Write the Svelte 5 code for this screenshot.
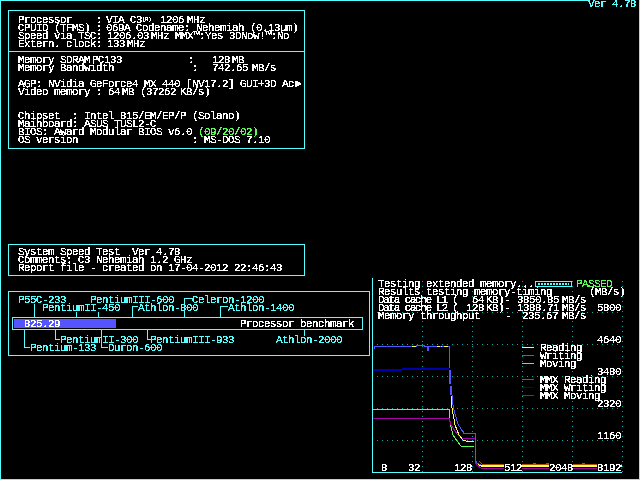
<script>
  const top1 = [
    [['Processor    :'], [' VIA C3', 'n2'], ['(R)', 'sup'], [' 1206', 'p3'], [' MHz', 'n3']],
    [['CPUID (TFMS) :'], [' 069A Codename: Nehemiah (0.13µm)', 'n2']],
    [['Speed via TSC:'], [' 1206.03', 'n1'], [' MHz', 'n4'], [' MMX™:Yes 3DNow!™:No']],
    [['Extern. clock:'], [' 133', 'n1'], [' MHz', 'n4']]
  ];
  const top2 = [
    [['Memory SDRAM'], [' PC133', 'n4'], ['           :   128'], [' MB', 'n4']],
    [['Memory Bandwidth             :  '], [' 742.65', 'n4'], [' MB/s', 'n2']],
    [],
    [['AGP: NVidia GeForce4 MX 440 [NV17.2] GUI+3D Ac'], ['►', 'p1']],
    [['Video memory : 64'], [' MB', 'n4'], [' (37262'], [' KB/s)', 'n2']],
    [],
    [],
    [['Chipset  : Intel 815/EM/EP/P (Solano)']],
    [['Mainboard: ASUS TUSL2-C']],
    [['BIOS: Award Modular BIOS v6.0 '], ['(09/20/02)', 'green']],
    [['OS version                   : MS-DOS 7.10']]
  ];
  const sys = [
    'System Speed Test  Ver 4.78',
    'Comments: C3 Nehemiah 1.2 GHz',
    'Report file - created on 17-04-2012 22:46:43'
  ];
  const labels = [
    ['P55C-233', 18, 303], ['PentiumIII-600', 90, 303], ['Celeron-1200', 192, 303],
    ['PentiumII-450', 42, 311], ['Athlon-800', 138, 311], ['Athlon-1400', 228, 311],
    ['PentiumII-300', 60, 343], ['PentiumIII-933', 150, 343], ['Athlon-2000', 276, 343],
    ['Pentium-133', 30, 351], ['Duron-600', 108, 351]
  ];
  const connectors = [
    'M34.5 304V318', 'M76.5 312V318', 'M98.5 312V318',
    'M132.5 318V306.5H138', 'M184.5 318V298.5H192',
    'M220.5 318V306.5H228', 'M304.5 329V336',
    'M24.5 329V347.5H30', 'M55.5 329V339.5H60', 'M101.5 329V347.5H108', 'M147.5 329V339.5H151'
  ];
  const hGrid = [312, 344, 376, 408, 440];
  const vGrid = [422, 472, 522, 572, 622];
  const yLabels = [['5800', 311], ['4640', 343], ['3480', 375], ['2320', 407], ['1160', 439]];
  const xLabels = [['8', 381], ['32', 408], ['128', 454], ['512', 504], ['2048', 549], ['8192', 597]];
  const legend = [
    ['Reading', '#ffff55', 347], ['Writing', '#5555ff', 355], ['Moving', '#55ff55', 363],
    ['MMX Reading', '#aa5500', 379], ['MMX Writing', '#0000aa', 387], ['MMX Moving', '#aa00aa', 395]
  ];
  const results = [
    ['Data cache L1 (', 472, '64', '3850.85', 517],
    ['Data cache L2 (', 466, '128', '1388.71', 517]
  ];
  const series = [
    ['#55ff55', 1, 'M373 409H449V418L453 435L457 441L461 446H474'],
    ['#aa00aa', 1, 'M373 418H449L451 425L457 434L462 438H475V462L477 465L481 468H622'],
    ['#0000aa', 2, 'M374 370H402M402 369H449'],
    ['#ffff55', 1, 'M451 396L452 408L455 425L459 435L463 440L466 441H474'],
    ['#ffff55', 2, 'M478 464L482 466H622'],
    ['#5555ff', 1, 'M374 349V346H416V345H424V346H449V368'],
    ['#5555ff', 2, 'M450 370V384M451 386V395'],
    ['#5555ff', 1, 'M452 395L453 405L455 414L458 424L461 429L464 433H475V460L477 463L481 465'],
    ['#5555ff', 2, 'M428 346V351'],
    ['#aa5500', 1, 'M463 433H466M470 433H473M479 461L482 464H622M533 463H536M546 463H549M558 463H560M582 463H585'],
    ['#ffff55', 1, 'M412 346H416M437 346H440M441 346H442M444 346H448']
  ];
</script>

<svg class="defs" width="0" height="0" aria-hidden="true">
  <filter id="crisp" x="0" y="0" width="100%" height="100%" color-interpolation-filters="sRGB">
    <feComponentTransfer>
      <feFuncA type="discrete" tableValues="0 0 0 1 1 1 1 1 1 1" />
    </feComponentTransfer>
  </filter>
</svg>

<main class="screen">
  <section class="left">
    <div class="panel info">
      <div class="block">
        {#each top1 as row}
          <div class="row">{#each row as s}<span class={s[1] ?? ''}>{s[0]}</span>{/each}</div>
        {/each}
      </div>
      <div class="block second">
        {#each top2 as row}
          <div class="row">{#each row as s}<span class={s[1] ?? ''}>{s[0]}</span>{/each}</div>
        {/each}
      </div>
    </div>

    <div class="panel sys">
      {#each sys as row}
        <div class="row">{row}</div>
      {/each}
    </div>

    <svg class="bench" width="362" height="65" viewBox="8 291 362 65">
      <rect x="8.5" y="291.5" width="361" height="64" class="box" />
      <rect x="12.5" y="317.5" width="350" height="12" class="box" />
      <rect x="14" y="319" width="102" height="9" class="fill" />
      {#each connectors as d}<path {d} class="box" />{/each}
      <g class="txt">
        {#each labels as [t, x, y]}<text {x} {y}>{t}</text>{/each}
        <text x="24" y="327" class="white">825.29</text>
        <text x="240" y="327" class="white">Processor benchmark</text>
      </g>
    </svg>
  </section>

  <section class="right">
    <div class="ver">Ver 4.78</div>
    <svg class="chart" width="267" height="201" viewBox="372 278 267 201">
      <path d="M372.5 278V472.5H622" class="box" />
      {#each hGrid as y}<line x1="377" x2="622" y1={y + 0.5} y2={y + 0.5} class="grid" />{/each}
      {#each vGrid as x}<line x1={x + 0.5} x2={x + 0.5} y1="281" y2="472" class="grid" />{/each}
      {#each legend as [t, c, y]}
        <line x1="522" x2="534" y1={y + 0.5} y2={y + 0.5} stroke={c} />
      {/each}
      {#each series as [c, w, d]}
        <path {d} stroke={c} stroke-width={w} fill="none" />
      {/each}
      {#each xLabels as [t, x]}
        <rect {x} y="463" width={t.length * 6} height="9" fill="#000" />
      {/each}
      <rect x="535.5" y="281.5" width="36" height="5" class="box" />
      <line x1="538" x2="569" y1="284" y2="284" class="meter" />
      <g class="txt">
        <text class="white" x="378" y="287">Testing extended memory...</text>
        <text x="576" y="287" class="lgreen">PASSED</text>
        <text class="white" x="378" y="295">Results testing memory-timing</text>
        <text class="white" x="589" y="295">(MB/s)</text>
        {#each results as [head, x, size, val, vx], i}
          <text class="white" x="378" y={303 + i * 8} textLength="80" lengthAdjust="spacing">{head}</text>
          <text class="white" {x} y={303 + i * 8}>{size}</text>
          <text class="white" x="486" y={303 + i * 8}>KB)-</text>
          <text class="white" x={vx} y={303 + i * 8}>{val}</text>
          <text class="white" x="562" y={303 + i * 8}>MB/s</text>
        {/each}
        <text class="white" x="378" y="319">Memory throughput</text>
        <text class="white" x="505" y="319">-</text>
        <text class="white" x="522" y="319">235.67</text>
        <text class="white" x="562" y="319">MB/s</text>
        {#each yLabels as [t, y]}<text class="white" x="597" {y}>{t}</text>{/each}
        {#each xLabels as [t, x]}<text class="white" {x} y="471">{t}</text>{/each}
        {#each legend as [t, , y]}<text class="white" x="540" y={y + 4}>{t}</text>{/each}
      </g>
    </svg>
  </section>
</main>

<style>
  :global(body) { margin: 0; background: #000; }
  .defs { position: absolute; }
  .screen {
    box-sizing: border-box;
    width: 640px;
    height: 480px;
    display: flex;
    background-color: #000;
    border: solid #55ffff;
    border-width: 0 1px 1px 1px;
    color: #fff;
    font: 11px/8px "Liberation Mono", monospace;
    letter-spacing: -0.6px;
    overflow: hidden;
    background-image: linear-gradient(#55ffff, #55ffff);
    background-size: 587px 1px;
    background-repeat: no-repeat;
  }
  .left {
    width: 371px;
    flex: none;
    padding: 10px 0 0 7px;
    box-sizing: border-box;
    display: flex;
    flex-direction: column;
  }
  .right { flex: 1; display: flex; flex-direction: column; align-items: flex-end; }
  .panel {
    box-sizing: border-box;
    width: 297px;
    border: 1px solid #55ffff;
    filter: url(#crisp);
  }
  .info { height: 139px; }
  .block { height: 40px; padding: 5px 0 0 9px; box-sizing: border-box; }
  .block.second { height: 97px; padding-top: 4px; border-top: 1px solid #55ffff; }
  .sys { height: 32px; margin-top: 95px; padding: 3px 0 0 9px; }
  .row { height: 8px; white-space: pre; }
  .sup { font-size: 6px; vertical-align: 2px; line-height: 0; }
  .n1 { margin-left: -1px; }
  .n2 { margin-left: -2px; }
  .n3 { margin-left: -3px; }
  .n4 { margin-left: -4px; }
  .p1 { margin-left: 1px; }
  .p3 { margin-left: 3px; }
  .green { color: #55ff55; }
  .bench { display: block; margin-top: 15px; flex: none; }
  .box { fill: none; stroke: #55ffff; shape-rendering: crispEdges; }
  .fill { fill: #5555ff; stroke: none; }
  .bench text, .chart text { font: 11px "Liberation Mono", monospace; letter-spacing: -0.6px; fill: #55ffff; white-space: pre; }
  .bench .white, .chart .white { fill: #fff; }
  .chart .lgreen { fill: #55ff55; }
  .txt { filter: url(#crisp); }
  .ver { color: #55ffff; height: 8px; padding-right: 3px; filter: url(#crisp); }
  .chart { display: block; margin-top: 270px; flex: none; }
  .chart path, .chart line { shape-rendering: crispEdges; }
  .grid { stroke: #00aaaa; stroke-dasharray: 1 4; }
  .meter { stroke: #55ffff; stroke-dasharray: 2 1; stroke-width: 2; }
</style>
